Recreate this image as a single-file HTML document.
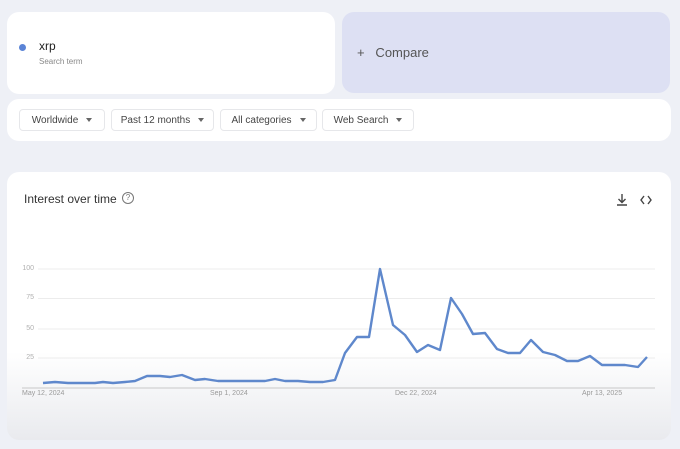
<!DOCTYPE html>
<html><head><style>
body{margin:0;width:680px;height:449px;background:#eef0f6;font-family:"Liberation Sans",sans-serif;position:relative;overflow:hidden}
.a{position:absolute}
.card{background:#fff;border-radius:12px}
.btn{position:absolute;top:109px;height:22px;border:1px solid #e6e7ea;border-radius:4px;font-size:10px;color:#444;line-height:22px;box-sizing:border-box;text-align:center;background:#fff}
.btn i{display:inline-block;width:0;height:0;border-left:3px solid transparent;border-right:3px solid transparent;border-top:4px solid #666;margin-left:8px;vertical-align:1px}
.yl{position:absolute;left:18px;font-size:7px;color:#b0b0b0;width:16px;text-align:right}
.xl{position:absolute;top:390px;font-size:7px;color:#9a9a9a}
</style></head><body>
<div class="a card" style="left:7px;top:12px;width:328px;height:82px"></div>
<div class="a" style="left:19px;top:44px;width:7px;height:7px;border-radius:50%;background:#5b84d6"></div>
<div class="a" style="left:39px;top:39px;font-size:12px;color:#222">xrp</div>
<div class="a" style="left:39px;top:57px;font-size:8px;color:#888">Search term</div>
<div class="a" style="left:342px;top:12px;width:328px;height:81px;background:#dde0f3;border-radius:12px"></div>
<div class="a" style="left:357px;top:45px;font-size:13px;color:#555">+&nbsp;&nbsp;&nbsp;Compare</div>
<div class="a card" style="left:7px;top:99px;width:664px;height:42px"></div>
<div class="btn" style="left:19px;width:86px">Worldwide<i></i></div>
<div class="btn" style="left:111px;width:103px">Past 12 months<i></i></div>
<div class="btn" style="left:220px;width:97px">All categories<i></i></div>
<div class="btn" style="left:322px;width:92px">Web Search<i></i></div>
<div class="a" style="left:7px;top:172px;width:664px;height:268px;border-radius:12px;background:linear-gradient(#fff 0,#fff 180px,#e9eaee 268px)"></div>
<div class="a" style="left:24px;top:192px;font-size:12px;color:#333">Interest over time</div>
<div class="a" style="left:122px;top:192px;width:10px;height:10px;border:1px solid #777;border-radius:50%;font-size:8px;text-align:center;line-height:10px;color:#777">?</div>
<svg class="a" style="left:614px;top:192px" width="40" height="16"><path d="M8 2v8M4.5 7l3.5 3.5 3.5-3.5M3 13h10" stroke="#444" stroke-width="1.4" fill="none"/><path d="M30 4l-3 4 3 4M34 4l3 4-3 4" stroke="#444" stroke-width="1.4" fill="none"/></svg>
<div class="yl" style="top:265px">100</div><div class="yl" style="top:294px">75</div><div class="yl" style="top:325px">50</div><div class="yl" style="top:354px">25</div>
<svg class="a" style="left:0;top:0" width="680" height="449">
<g stroke="#ececec" stroke-width="1"><line x1="38" y1="269" x2="655" y2="269"/><line x1="38" y1="298.5" x2="655" y2="298.5"/><line x1="38" y1="329" x2="655" y2="329"/><line x1="38" y1="358" x2="655" y2="358"/></g>
<line x1="22" y1="388" x2="655" y2="388" stroke="#c8c8c8"/>
<polyline fill="none" stroke="#5f88cc" stroke-width="2.4" stroke-linejoin="round" points="43,383 55,382 68,383 95,383 103,382 113,383 125,382 135,381 147,376 160,376 170,377 182,375 195,380 205,379 218,381 265,381 275,379 285,381 298,381 310,382 323,382 335,380 345,353 357,337 369,337 380,269 393,325 405,335 417,352 428,345 440,350 451,298 462,314 473,334 485,333 497,349 508,353 520,353 531,340 543,352 555,355 567,361 578,361 590,356 602,365 625,365 638,367 647,357"/>
</svg>
<div class="xl" style="left:22px">May 12, 2024</div>
<div class="xl" style="left:210px">Sep 1, 2024</div>
<div class="xl" style="left:395px">Dec 22, 2024</div>
<div class="xl" style="left:582px">Apr 13, 2025</div>
</body></html>
